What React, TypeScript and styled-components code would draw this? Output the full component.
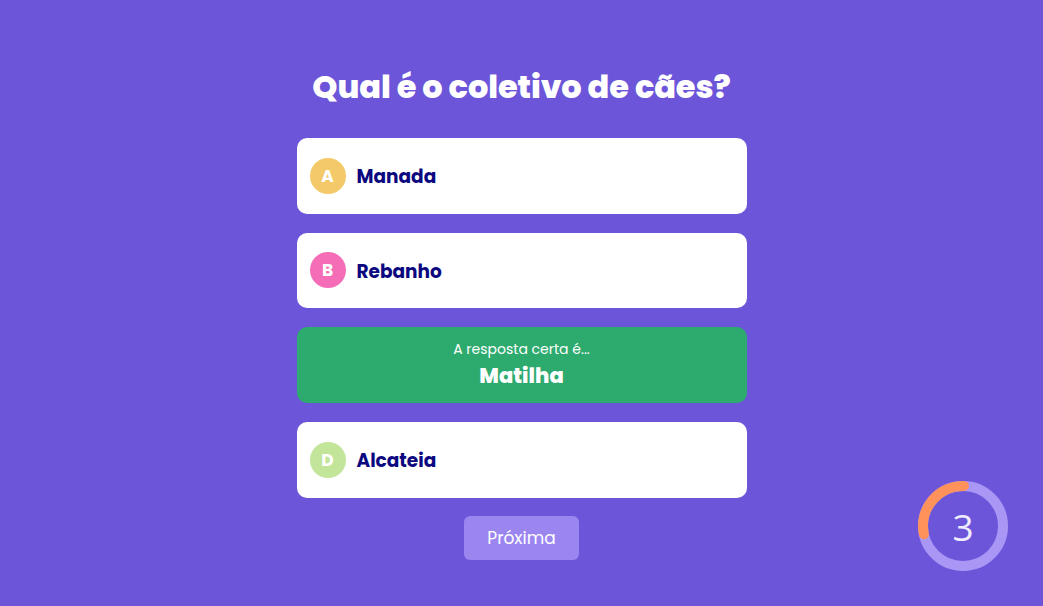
import React from "react";
import styled, { createGlobalStyle } from "styled-components";

const Global = createGlobalStyle`
  html, body { margin: 0; padding: 0; }
  body {
    background: #6c55d9;
    font-family: "Poppins", "Open Sans", "Noto Sans", sans-serif;
    width: 1043px;
    height: 606px;
    overflow: hidden;
  }
`;

const Page = styled.main`
  position: relative;
  width: 1043px;
  height: 606px;
  display: flex;
  flex-direction: column;
  align-items: center;
  padding-top: 63px;
  box-sizing: border-box;
`;

const Title = styled.h1`
  margin: 0 0 27px;
  font-size: 32px;
  line-height: 48px;
  font-weight: 800;
  color: #ffffff;
  letter-spacing: -0.1px;
`;

const Options = styled.div`
  display: flex;
  flex-direction: column;
  gap: 18.8px;
  width: 450px;
`;

const Option = styled.div`
  height: 75.8px;
  box-sizing: border-box;
  background: #ffffff;
  border-radius: 10px;
  display: flex;
  align-items: center;
  padding: 0 13px;
  gap: 11px;
`;

const Badge = styled.span<{ $color: string }>`
  width: 36px;
  height: 36px;
  border-radius: 50%;
  background: ${(p) => p.$color};
  color: #ffffff;
  font-weight: 700;
  font-size: 17px;
  display: flex;
  align-items: center;
  justify-content: center;
`;

const Label = styled.span`
  font-size: 18.5px;
  font-weight: 700;
  color: #0c0880;
  padding-top: 2px;
`;

const Correct = styled.div`
  height: 75.8px;
  box-sizing: border-box;
  background: #2daa6e;
  border-radius: 10px;
  display: flex;
  flex-direction: column;
  align-items: center;
  justify-content: center;
  color: #ffffff;
  padding-top: 4px;
`;

const Hint = styled.span`
  font-size: 14px;
  line-height: 18px;
  font-weight: 400;
  margin-top: -2px;
`;

const Answer = styled.span`
  font-size: 21px;
  line-height: 32px;
  font-weight: 800;
  margin-top: 2px;
`;

const NextButton = styled.button`
  margin-top: 18.5px;
  width: 115px;
  height: 44px;
  border: none;
  border-radius: 6px;
  background: #9b85ef;
  color: #ffffff;
  font-family: inherit;
  font-size: 17px;
  font-weight: 400;
  cursor: pointer;
`;

const Timer = styled.div`
  position: absolute;
  right: 35px;
  bottom: 35px;
  width: 90px;
  height: 90px;
  display: flex;
  align-items: center;
  justify-content: center;
`;

const Ring = styled.svg`
  position: absolute;
  inset: 0;
`;

const Count = styled.span`
  position: relative;
  font-family: "Open Sans", "Noto Sans", sans-serif;
  font-size: 37px;
  font-weight: 400;
  color: #f0ecff;
`;

const options = [
  { letter: "A", color: "#f3c969", text: "Manada" },
  { letter: "B", color: "#f46db6", text: "Rebanho" },
];

export default function App() {
  return (
    <>
      <Global />
      <Page>
        <Title>Qual é o coletivo de cães?</Title>
        <Options>
          {options.map((o) => (
            <Option key={o.letter}>
              <Badge $color={o.color}>{o.letter}</Badge>
              <Label>{o.text}</Label>
            </Option>
          ))}
          <Correct>
            <Hint>A resposta certa é...</Hint>
            <Answer>Matilha</Answer>
          </Correct>
          <Option>
            <Badge $color="#c3e59a">D</Badge>
            <Label>Alcateia</Label>
          </Option>
        </Options>
        <NextButton>Próxima</NextButton>
        <Timer>
          <Ring width="90" height="90" viewBox="0 0 90 90">
            <circle cx="45" cy="45" r="40" fill="none" stroke="#a996f5" strokeWidth="10" />
            <path
              d="M 46 5 A 40 40 0 0 0 5.9 53.3"
              fill="none"
              stroke="#ff915a"
              strokeWidth="10"
              strokeLinecap="round"
            />
          </Ring>
          <Count>3</Count>
        </Timer>
      </Page>
    </>
  );
}
